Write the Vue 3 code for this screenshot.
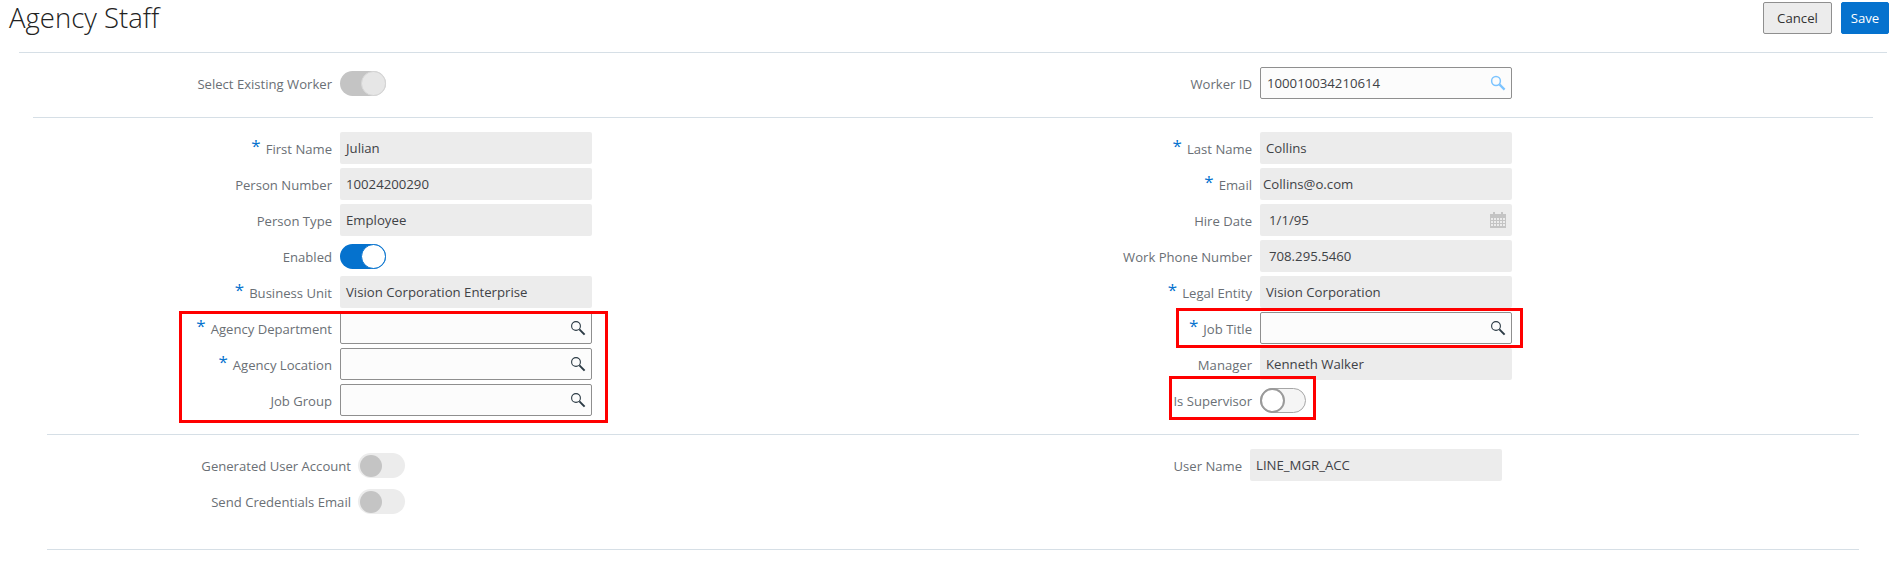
<script setup>
const leftFields = [
  { label: "First Name", required: true, value: "Julian" },
  { label: "Person Number", value: "10024200290" },
  { label: "Person Type", value: "Employee" },
  { label: "Enabled", toggle: "on" },
  { label: "Business Unit", required: true, value: "Vision Corporation Enterprise" },
  { label: "Agency Department", required: true, input: true },
  { label: "Agency Location", required: true, input: true },
  { label: "Job Group", input: true },
];

const rightFields = [
  { label: "Last Name", required: true, value: "Collins" },
  { label: "Email", required: true, value: "Collins@o.com", pad: "tight" },
  { label: "Hire Date", value: "1/1/95", pad: "wide", calendar: true },
  { label: "Work Phone Number", value: "708.295.5460", pad: "wide" },
  { label: "Legal Entity", required: true, value: "Vision Corporation" },
  { label: "Job Title", required: true, input: true },
  { label: "Manager", value: "Kenneth Walker" },
  { label: "Is Supervisor", toggle: "off" },
];

const accountFields = [
  { label: "Generated User Account", toggle: "disabled-off" },
  { label: "Send Credentials Email", toggle: "disabled-off" },
];

// the three red annotation boxes drawn on top of the form
const highlights = [
  { left: 179, top: 311, width: 429, height: 112 },
  { left: 1176, top: 308, width: 347, height: 40 },
  { left: 1169, top: 376, width: 147, height: 44 },
];
</script>

<template>
  <div class="page">
    <header class="header">
      <h1 class="title">Agency Staff</h1>
      <div class="actions">
        <button class="btn cancel">Cancel</button>
        <button class="btn save">Save</button>
      </div>
    </header>

    <div class="rule rule-top"></div>

    <section class="section">
      <div class="col col-left">
        <div class="row">
          <span class="label">Select Existing Worker</span>
          <span class="toggle disabled-on"><i></i></span>
        </div>
      </div>
      <div class="col col-right">
        <div class="row">
          <span class="label">Worker ID</span>
          <div class="box input">
            <span class="value">100010034210614</span>
            <svg class="search light" viewBox="0 0 16 16" width="16" height="16">
              <circle cx="6" cy="6" r="4.4" fill="none" stroke="currentColor" stroke-width="1.5" />
              <path d="M9.4 9.4 14.6 14.6" stroke="currentColor" stroke-width="2.2" fill="none" />
            </svg>
          </div>
        </div>
      </div>
    </section>

    <div class="rule rule-second"></div>

    <section class="section">
      <div v-for="(fields, i) in [leftFields, rightFields]" :key="i" class="col" :class="i ? 'col-right' : 'col-left'">
        <div v-for="f in fields" :key="f.label" class="row">
          <span class="label"><b v-if="f.required" class="star">*</b>{{ f.label }}</span>
          <span v-if="f.toggle" class="toggle" :class="f.toggle"><i></i></span>
          <div v-else-if="f.input" class="box input">
            <svg class="search" viewBox="0 0 16 16" width="16" height="16">
              <circle cx="6" cy="6" r="4.4" fill="none" stroke="currentColor" stroke-width="1.1" />
              <path d="M9.4 9.4 14.6 14.6" stroke="currentColor" stroke-width="2" fill="none" />
            </svg>
          </div>
          <div v-else class="box readonly" :class="f.pad">
            <span class="value">{{ f.value }}</span>
            <svg v-if="f.calendar" class="calendar" viewBox="0 0 16 16" width="16" height="16">
              <path
                d="M0 2h3V0h2v2h6V0h2v2h3v14H0zM1 6v2h2V6zm3 0v2h2V6zm3 0v2h2V6zm3 0v2h2V6zm3 0v2h2V6zM1 9v2h2V9zm3 0v2h2V9zm3 0v2h2V9zm3 0v2h2V9zm3 0v2h2V9zM1 12v2h2v-2zm3 0v2h2v-2zm3 0v2h2v-2zm3 0v2h2v-2zm3 0v2h2v-2z"
                fill="currentColor"
                fill-rule="evenodd"
              />
            </svg>
          </div>
        </div>
      </div>
    </section>

    <div class="rule rule-low"></div>

    <section class="section account">
      <div class="col col-account">
        <div v-for="f in accountFields" :key="f.label" class="row">
          <span class="label">{{ f.label }}</span>
          <span class="toggle" :class="f.toggle"><i></i></span>
        </div>
      </div>
      <div class="col col-right">
        <div class="row">
          <span class="label">User Name</span>
          <div class="box readonly"><span class="value">LINE_MGR_ACC</span></div>
        </div>
      </div>
    </section>

    <div class="rule rule-low"></div>

    <div
      v-for="(h, i) in highlights"
      :key="i"
      class="highlight"
      :style="{ left: h.left + 'px', top: h.top + 'px', width: h.width + 'px', height: h.height + 'px' }"
    ></div>
  </div>
</template>

<style>
html,
body {
  background: #fff;
}
</style>

<style scoped>
.page {
  position: relative;
  width: 1901px;
  height: 567px;
  overflow: hidden;
  font-family: "Open Sans", "Noto Sans", sans-serif;
  font-size: 13.2px;
  color: #3f4246;
}

.header {
  display: flex;
  justify-content: space-between;
  height: 52px;
  padding: 2px 12px 0 9px;
  box-sizing: border-box;
}

.title {
  margin: 0;
  font-size: 27.5px;
  line-height: 32px;
  font-weight: 300;
  color: #222;
}

.actions {
  display: flex;
  gap: 9px;
}

.btn {
  height: 32px;
  border-radius: 2px;
  font: inherit;
  padding: 0;
}

.cancel {
  width: 69px;
  border: 1px solid #8f8f8f;
  background: #ececec;
  color: #333;
}

.save {
  width: 48px;
  border: 1px solid #0572ce;
  background: #0572ce;
  color: #fff;
}

.rule {
  height: 1px;
  background: #d6dfe6;
}

.rule-top {
  margin: 0 14px 0 19px;
}

.rule-second {
  margin: 0 28px 0 33px;
}

.rule-low {
  margin: 0 42px 0 47px;
}

.section {
  display: flex;
  padding: 14px 0 18px;
}

.account {
  height: 114px;
  box-sizing: border-box;
}

.col {
  display: flex;
  flex-direction: column;
  gap: 4px;
}

.col-left {
  width: 920px;
}

.col-account {
  width: 910px;
}

.row {
  display: flex;
  align-items: center;
  gap: 8px;
  height: 32px;
}

.label {
  width: 332px;
  padding-top: 1px;
  text-align: right;
  font-size: 13.1px;
  color: #6a6f75;
}

.col-account .label {
  width: 351px;
}

.col-account .row {
  gap: 7px;
}

.star {
  margin-right: 5px;
  color: #0572ce;
  font-weight: 400;
  font-size: 17px;
  line-height: 1;
  position: relative;
  top: -2px;
}

.box {
  display: flex;
  align-items: center;
  justify-content: space-between;
  width: 252px;
  height: 32px;
  box-sizing: border-box;
  border-radius: 2px;
  padding: 0 6px;
}

.readonly {
  background: #ececec;
}

.readonly.tight {
  padding-left: 3px;
}

.readonly.wide {
  padding-left: 9px;
}

.input {
  background: #fcfcfc;
  border: 1px solid #8f8f8f;
  justify-content: flex-end;
  padding-right: 5px;
}

.input .value {
  margin-right: auto;
}

.search {
  color: #2b3a44;
  flex: none;
}

.search.light {
  color: #7cc4ff;
}

.calendar {
  color: #c4c4c4;
}

.toggle {
  position: relative;
  display: block;
  width: 46px;
  height: 25px;
  border-radius: 13px;
  box-sizing: border-box;
}

.toggle i {
  position: absolute;
  top: 0;
  width: 25px;
  height: 25px;
  border-radius: 50%;
  box-sizing: border-box;
}

.toggle.on {
  background: #0572ce;
}

.toggle.on i {
  right: 0;
  background: #fff;
  border: 1px solid #0572ce;
}

.toggle.off {
  background: #f5f5f5;
  border: 1px solid #a6a6a6;
}

.toggle.off i {
  left: -1px;
  top: -1px;
  background: #fff;
  border: 2px solid #9a9a9a;
}

.toggle.disabled-on {
  background: #c4c4c4;
}

.toggle.disabled-on i {
  right: 0;
  background: #e6e6e6;
  border: 1px solid #d6d6d6;
}

.toggle.disabled-off {
  width: 47px;
  background: #ececec;
}

.toggle.disabled-off i {
  left: 2px;
  top: 2px;
  width: 22px;
  height: 22px;
  background: #c4c4c4;
}

.highlight {
  position: absolute;
  box-sizing: border-box;
  border: 3px solid #f00;
}
</style>
